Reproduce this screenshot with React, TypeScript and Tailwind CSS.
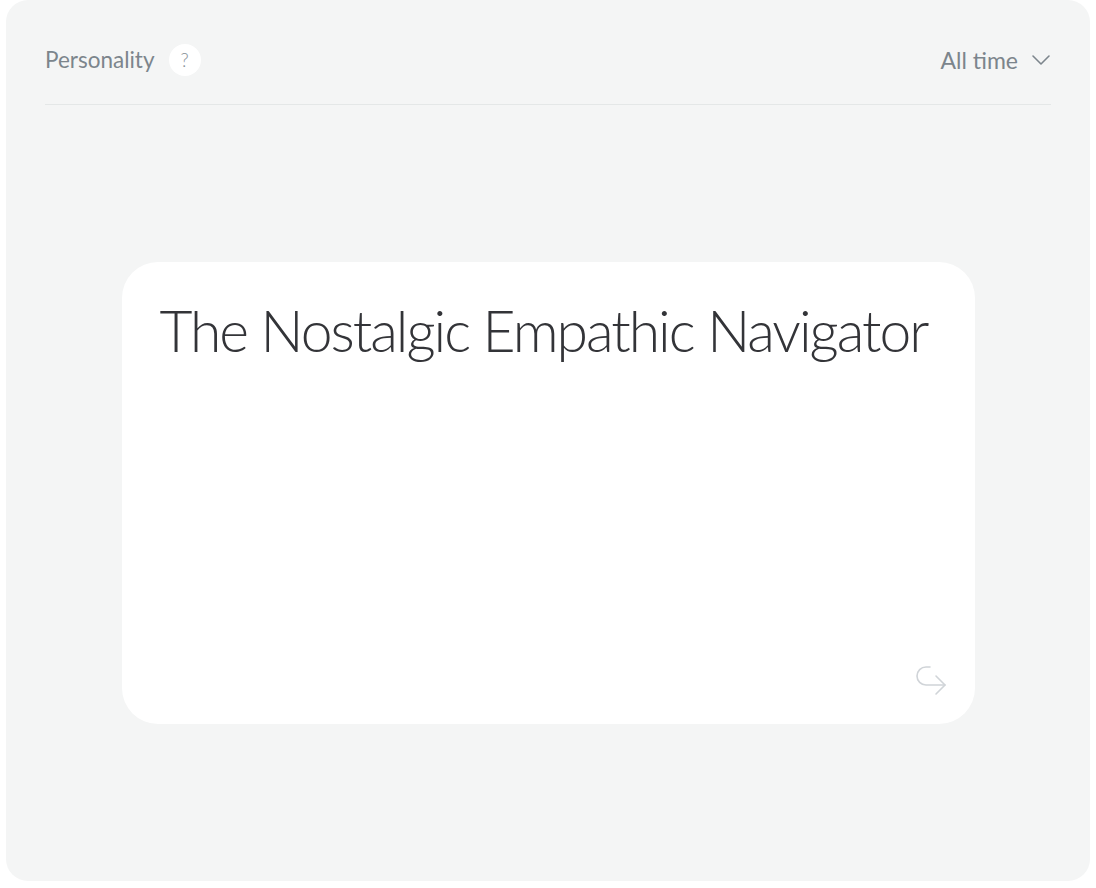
import React from "react";

function ForwardArrow() {
  return (
    <svg width="32" height="32" viewBox="0 0 32 32" fill="none" stroke="#d0d4d8" strokeWidth="1.6" strokeLinecap="round" strokeLinejoin="round">
      <path d="M15 3H11a9 9 0 0 0 0 18h19" />
      <path d="M21 12l9 9-9 9" />
    </svg>
  );
}

function Chevron() {
  return (
    <svg width="20" height="12" viewBox="0 0 20 12" fill="none" stroke="#7c858c" strokeWidth="1.6" strokeLinecap="round" strokeLinejoin="round">
      <path d="M2 2l8 8 8-8" />
    </svg>
  );
}

export default function App() {
  return (
    <div className="min-h-[888px] bg-white" style={{ fontFamily: "Lato, 'Open Sans', sans-serif" }}>
      <div className="ml-[6px] flex h-[881px] w-[1084px] flex-col rounded-[22px] bg-[#f4f5f5]">
        <header className="mx-[39px] flex items-center justify-between border-b border-[#e4e7e7] pt-[43px] pb-[26px]">
          <div className="flex items-center gap-[14px]">
            <span className="text-[22.5px] text-[#7c858c]">Personality</span>
            <span className="flex h-[32px] w-[32px] items-center justify-center rounded-full bg-white text-[19px] font-light text-[#8a9299]">
              ?
            </span>
          </div>
          <button className="flex items-center gap-[13px] text-[23px] text-[#7c858c]">
            All time
            <Chevron />
          </button>
        </header>

        <div className="flex flex-1 items-center justify-center">
          <div className="flex h-[462px] w-[853px] flex-col rounded-[36px] bg-white pt-[33px] pr-[28px] pb-[28px] pl-[38px]">
            <h1 className="whitespace-nowrap text-[57px] leading-[70px] font-light tracking-[-2px] text-[#333438]">
              The Nostalgic Empathic Navigator
            </h1>
            <div className="mt-auto self-end">
              <ForwardArrow />
            </div>
          </div>
        </div>
      </div>
    </div>
  );
}
